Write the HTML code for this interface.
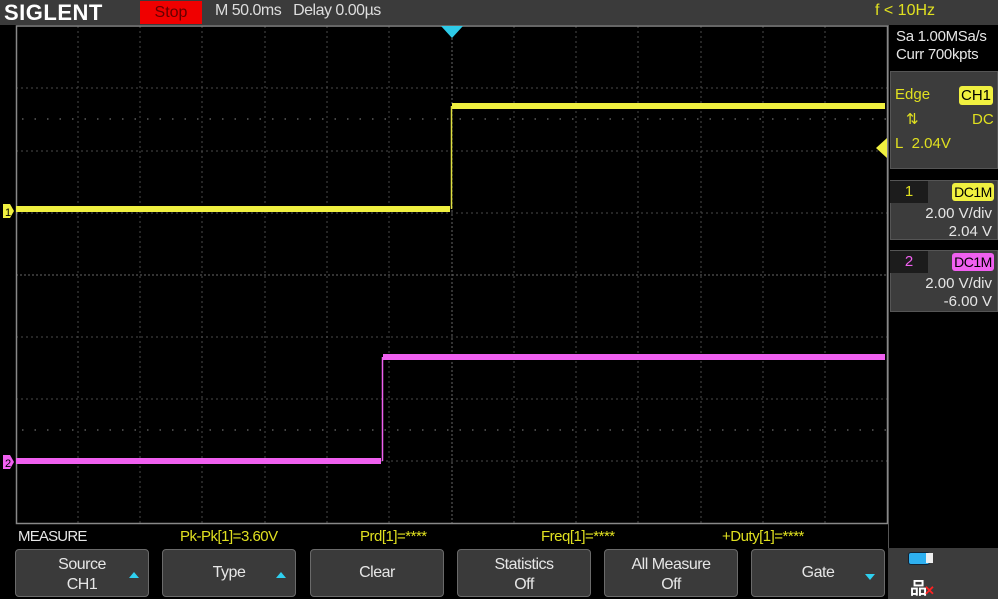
<!DOCTYPE html>
<html><head><style>
body{margin:0;width:998px;height:599px;background:#000;overflow:hidden;font-family:"Liberation Sans",sans-serif;position:relative}
.a{position:absolute}
.btn{position:absolute;top:549px;width:134px;height:48px;background:#3a3a3a;border:1px solid #6a6a6a;border-radius:4px;box-sizing:border-box;color:#e6e6e6;font-size:16px;text-align:center;letter-spacing:-0.5px}
.arr{position:absolute;right:9px;width:0;height:0;border-left:5px solid transparent;border-right:5px solid transparent}
.up{border-bottom:6px solid #2ed0f0;top:22px}
.dn{border-top:6px solid #2ed0f0;top:24px}
.m{position:absolute;top:528px;font-size:15px;color:#e0e020;letter-spacing:-0.5px}
</style></head><body>
<div class="a" style="left:0;top:0;width:998px;height:25px;background:#3b3b3b"></div>
<div class="a" style="left:4px;top:0px;font-size:22px;font-weight:bold;color:#fff;letter-spacing:0.5px">SIGLENT</div>
<div class="a" style="left:140px;top:1px;width:62px;height:23px;background:#f00000;color:#600;font-size:16px;text-align:center;line-height:23px">Stop</div>
<div class="a" style="left:215px;top:2px;font-size:16px;color:#ddd;letter-spacing:-0.5px">M 50.0ms&nbsp;&nbsp;&nbsp;Delay 0.00µs</div>
<div class="a" style="left:875px;top:2px;font-size:16px;color:#e0e020">f &lt; 10Hz</div>
<svg class="a" style="left:0;top:0" width="998" height="599">
<g stroke="#4a4a4a" stroke-width="1" stroke-dasharray="2,3">
<line x1="78" y1="26" x2="78" y2="524"/><line x1="140" y1="26" x2="140" y2="524"/><line x1="202" y1="26" x2="202" y2="524"/><line x1="265" y1="26" x2="265" y2="524"/><line x1="327" y1="26" x2="327" y2="524"/><line x1="389" y1="26" x2="389" y2="524"/><line x1="514" y1="26" x2="514" y2="524"/><line x1="576" y1="26" x2="576" y2="524"/><line x1="638" y1="26" x2="638" y2="524"/><line x1="701" y1="26" x2="701" y2="524"/><line x1="763" y1="26" x2="763" y2="524"/><line x1="825" y1="26" x2="825" y2="524"/>
<line x1="16" y1="88" x2="888" y2="88"/><line x1="16" y1="151" x2="888" y2="151"/><line x1="16" y1="213" x2="888" y2="213"/><line x1="16" y1="337" x2="888" y2="337"/><line x1="16" y1="399" x2="888" y2="399"/><line x1="16" y1="461" x2="888" y2="461"/>
</g>
<g stroke="#5a5a5a" stroke-width="1.5" stroke-dasharray="1.5,11"><line x1="22" y1="119" x2="888" y2="119"/><line x1="22" y1="430" x2="888" y2="430"/></g>
<g stroke="#666" stroke-width="1" stroke-dasharray="2,2"><line x1="452" y1="26" x2="452" y2="524"/><line x1="16" y1="275" x2="888" y2="275"/></g>
<rect x="16.5" y="26" width="871" height="497.5" fill="none" stroke="#888" stroke-width="1.5"/>
<polygon points="441,26 463,26 452,38" fill="#2ecbe8"/>
<path d="M16 209 H450 M452 106 H885" fill="none" stroke="#f0f040" stroke-width="6"/>
<path d="M451.5 209 V106" stroke="#e0e040" stroke-width="1.5"/>
<path d="M16 461 H381 M383 357 H885" fill="none" stroke="#f060f0" stroke-width="6"/>
<path d="M382.5 461 V357" stroke="#f060f0" stroke-width="1.5"/>
<polygon points="3,204 10,204 14,211 10,218 3,218" fill="#f0f040"/>
<text x="5" y="216" font-size="11" fill="#000" font-family="Liberation Sans">1</text>
<polygon points="3,455 10,455 14,462 10,469 3,469" fill="#f060f0"/>
<text x="5" y="467" font-size="11" fill="#000" font-family="Liberation Sans">2</text>
<polygon points="876,148 887,138 887,158" fill="#f0f040"/>
</svg>
<div class="a" style="left:888px;top:25px;width:110px;height:574px;background:#000;border-left:1px solid #555"></div>
<div class="a" style="left:896px;top:28px;font-size:15px;color:#e6e6e6;line-height:18px;letter-spacing:-0.3px">Sa 1.00MSa/s<br>Curr 700kpts</div>
<div class="a" style="left:890px;top:71px;width:108px;height:98px;background:#3c3c3c;border:1px solid #555;box-sizing:border-box"></div>
<div class="a" style="left:895px;top:86px;font-size:15px;color:#e0e020">Edge</div>
<div class="a" style="left:959px;top:86px;width:34px;height:19px;background:#f0f040;border-radius:3px;color:#000;font-size:15px;text-align:center;line-height:19px">CH1</div>
<div class="a" style="left:906px;top:110px;font-size:15px;color:#e0e020">⇅</div>
<div class="a" style="left:972px;top:111px;font-size:15px;color:#e0e020">DC</div>
<div class="a" style="left:895px;top:135px;font-size:15px;color:#e0e020">L&nbsp;&nbsp;2.04V</div>
<div class="a" style="left:890px;top:180px;width:108px;height:60px;background:#3c3c3c;border:1px solid #555;box-sizing:border-box"></div>
<div class="a" style="left:890px;top:181px;width:38px;height:22px;background:#1c1c1c;color:#e0e020;font-size:15px;text-align:center;line-height:22px">1</div>
<div class="a" style="left:952px;top:183px;width:42px;height:18px;background:#f0f040;border-radius:3px;color:#000;font-size:14px;text-align:center;line-height:18px;letter-spacing:-0.5px">DC1M</div>
<div class="a" style="right:6px;top:205px;font-size:15px;color:#e6e6e6;text-align:right;line-height:18px">2.00 V/div<br>2.04 V</div>
<div class="a" style="left:890px;top:250px;width:108px;height:62px;background:#3c3c3c;border:1px solid #555;box-sizing:border-box"></div>
<div class="a" style="left:890px;top:251px;width:38px;height:22px;background:#1c1c1c;color:#f060f0;font-size:15px;text-align:center;line-height:22px">2</div>
<div class="a" style="left:952px;top:253px;width:42px;height:18px;background:#f060f0;border-radius:3px;color:#000;font-size:14px;text-align:center;line-height:18px;letter-spacing:-0.5px">DC1M</div>
<div class="a" style="right:6px;top:275px;font-size:15px;color:#e6e6e6;text-align:right;line-height:18px">2.00 V/div<br>-6.00 V</div>
<div class="a" style="left:888px;top:548px;width:110px;height:51px;background:#3c3c3c"></div>
<div class="a" style="left:908px;top:552px;width:20px;height:11px;background:#2eb0f0;border:1px solid #123;border-radius:3px"></div>
<div class="a" style="left:926px;top:553px;width:7px;height:10px;background:#eee"></div>
<div class="a" style="left:910px;top:574px;font-size:17px;color:#fff;font-weight:bold">品</div>
<div class="a" style="left:924px;top:583px;font-size:13px;color:#f22;font-weight:bold">✕</div>
<div class="a" style="left:18px;top:528px;font-size:15px;color:#e6e6e6;letter-spacing:-0.8px">MEASURE</div>
<div class="m" style="left:180px">Pk-Pk[1]=3.60V</div>
<div class="m" style="left:360px">Prd[1]=****</div>
<div class="m" style="left:541px">Freq[1]=****</div>
<div class="m" style="left:722px">+Duty[1]=****</div>
<div class="btn" style="left:15px;padding-top:5px;line-height:20px">Source<br>CH1<div class="arr up"></div></div>
<div class="btn" style="left:162px;line-height:46px">Type<div class="arr up"></div></div>
<div class="btn" style="left:310px;line-height:46px">Clear</div>
<div class="btn" style="left:457px;padding-top:5px;line-height:20px">Statistics<br>Off</div>
<div class="btn" style="left:604px;padding-top:5px;line-height:20px">All Measure<br>Off</div>
<div class="btn" style="left:751px;line-height:46px">Gate<div class="arr dn"></div></div>
</body></html>
